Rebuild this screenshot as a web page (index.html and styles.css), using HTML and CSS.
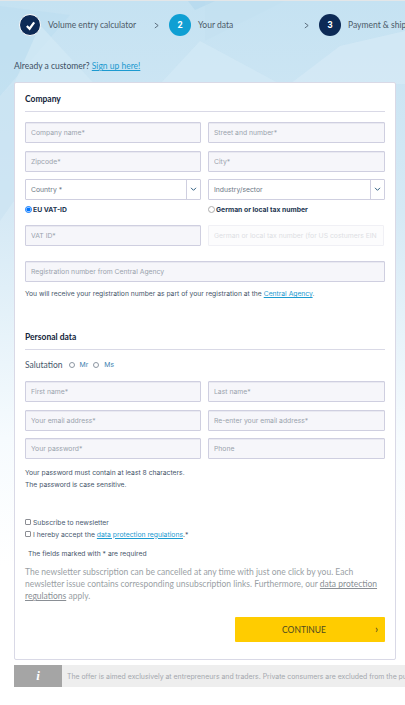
FILE: index.html
```html
<!DOCTYPE html>
<html lang="en">
  <head>
    <meta charset="UTF-8" />
    <meta name="viewport" content="width=device-width, initial-scale=1.0" />
    <title>Your data</title>
    <link rel="stylesheet" href="styles.css">
  </head>
  <body>
    <svg class="bg-shapes" viewBox="0 0 405 705" preserveAspectRatio="none" aria-hidden="true">
      <defs>
        <linearGradient id="bgFade" x1="0" y1="0" x2="0" y2="1">
          <stop offset="0" stop-color="#c5e2f2" />
          <stop offset="0.3" stop-color="#d5e9f5" />
          <stop offset="0.62" stop-color="#f6fbfe" />
          <stop offset="0.8" stop-color="#ffffff" />
        </linearGradient>
      </defs>
      <rect width="405" height="705" fill="url(#bgFade)" />
      <polygon points="0,5 70,14 0,95" fill="#bcddf0" opacity="0.6" />
      <polygon points="40,24 110,100 14,83" fill="#d3e9f5" opacity="0.7" />
      <polygon points="188,0 215,0 195,9" fill="#b5d9ee" opacity="0.8" />
      <polygon points="205,0 285,0 205,40" fill="#bfdff0" opacity="0.3" />
      <polygon points="200,40 280,83 160,83" fill="#d2e8f5" opacity="0.8" />
      <polygon points="340,45 405,30 405,83 290,83" fill="#d8ebf6" opacity="0.6" />
      <polygon points="0,95 14,83 14,200 0,220" fill="#c9e3f2" opacity="0.6" />
    </svg>

    <div class="steps">
      <div class="step">
        <span class="step-dot step-done">
          <svg viewBox="0 0 12 12" width="11" height="11"><path d="M2 6.5 L5 9.5 L10 2.5" fill="none" stroke="#fff" stroke-width="2.4" /></svg>
        </span>
        <span class="step-label">Volume entry calculator</span>
        <span class="step-arrow">
          <svg viewBox="0 0 6 8" width="5" height="7"><path d="M1 1 L5 4 L1 7" fill="none" stroke="#4b5a6a" stroke-width="1" /></svg>
        </span>
      </div>
      <div class="step">
        <span class="step-dot step-active">2</span>
        <span class="step-label">Your data</span>
        <span class="step-arrow">
          <svg viewBox="0 0 6 8" width="5" height="7"><path d="M1 1 L5 4 L1 7" fill="none" stroke="#4b5a6a" stroke-width="1" /></svg>
        </span>
      </div>
      <div class="step">
        <span class="step-dot">3</span>
        <span class="step-label">Payment &amp; shipping</span>
      </div>
    </div>

    <p class="customer">Already a customer? <a href="#">Sign up here!</a></p>

    <form class="card">
      <h2 class="section-title">Company</h2>
      <div class="field-grid">
        <input class="field" type="text" placeholder="Company name*" />
        <input class="field" type="text" placeholder="Street and number*" />
        <input class="field" type="text" placeholder="Zipcode*" />
        <input class="field" type="text" placeholder="City*" />
        <div class="select"><span>Country *</span><b><svg viewBox="0 0 8 6" width="7" height="5"><path d="M1 1 L4 4 L7 1" fill="none" stroke="#1d4f73" stroke-width="1.1" /></svg></b></div>
        <div class="select"><span>Industry/sector</span><b><svg viewBox="0 0 8 6" width="7" height="5"><path d="M1 1 L4 4 L7 1" fill="none" stroke="#1d4f73" stroke-width="1.1" /></svg></b></div>
      </div>

      <div class="tax-grid">
        <label class="tax-choice"><input type="radio" name="tax" checked /> EU VAT-ID</label>
        <label class="tax-choice"><input type="radio" name="tax" /> German or local tax number</label>
        <input class="field" type="text" placeholder="VAT ID*" />
        <input class="field field-off" type="text" placeholder="German or local tax number (for US costumers EIN" />
      </div>

      <input class="field field-wide" type="text" placeholder="Registration number from Central Agency" />
      <p class="note note-agency">You will receive your registration number as part of your registration at the <a href="#">Central Agency</a>.</p>

      <h2 class="section-title section-personal">Personal data</h2>
      <div class="salutation">
        <span class="salutation-label">Salutation</span>
        <label><i></i>Mr</label>
        <label><i></i>Ms</label>
      </div>
      <div class="field-grid">
        <input class="field" type="text" placeholder="First name*" />
        <input class="field" type="text" placeholder="Last name*" />
        <input class="field" type="text" placeholder="Your email address*" />
        <input class="field" type="text" placeholder="Re-enter your email address*" />
        <input class="field" type="text" placeholder="Your password*" />
        <input class="field" type="text" placeholder="Phone" />
      </div>
      <p class="note note-password">Your password must contain at least 8 characters.<br />The password is case sensitive.</p>

      <label class="check check-first"><input type="checkbox" /><span>Subscribe to newsletter</span></label>
      <label class="check"><input type="checkbox" /><span>I hereby accept the <a href="#">data protection regulations</a>.*</span></label>
      <p class="note note-required">The fields marked with * are required</p>
      <p class="newsletter">The newsletter subscription can be cancelled at any time with just one click by you. Each newsletter issue contains corresponding unsubscription links. Furthermore, our <a href="#">data protection regulations</a> apply.</p>

      <div class="actions">
        <button type="button" class="continue">CONTINUE<span>›</span></button>
      </div>
    </form>

    <div class="info-bar">
      <div class="info-icon">i</div>
      <p>The offer is aimed exclusively at entrepreneurs and traders. Private consumers are excluded from the purchase.</p>
    </div>
  </body>
</html>
```

FILE: styles.css
```css
* {
  margin: 0;
  padding: 0;
  box-sizing: border-box;
}

html,
body {
  height: 705px;
  overflow: hidden;
}

body {
  position: relative;
  font-family: "Lato", sans-serif;
  color: #1c3550;
  background-color: #fff;
  border-top: 1px solid #e3e6e8;
}

a {
  color: #1c9ad0;
}

.bg-shapes {
  position: absolute;
  top: 0;
  left: 0;
  width: 405px;
  height: 705px;
  z-index: -1;
}

/* Steps */
.steps {
  display: flex;
  padding: 13px 0 0 19px;
  width: 600px;
}

.step {
  display: flex;
  align-items: center;
  width: 150px;
  height: 22px;
  position: relative;
}

.step-dot {
  display: flex;
  justify-content: center;
  align-items: center;
  width: 22px;
  height: 22px;
  flex-shrink: 0;
  border-radius: 50%;
  background-color: #0d2a56;
  color: white;
  font-family: "Roboto", sans-serif;
  font-size: 9px;
  font-weight: bold;
}

.step-done {
  border: 1px solid #fff;
}

.step-active {
  background-color: #0f9fd3;
}

.step-label {
  margin-left: 7px;
  font-size: 8.5px;
  color: #4c5a68;
  white-space: nowrap;
}

.step-arrow {
  display: flex;
  position: absolute;
  left: 135px;
  top: 8px;
}

.customer {
  margin: 24px 0 0 14px;
  font-size: 8.5px;
  line-height: 13px;
  color: #3c4f63;
}

/* Card */
.card {
  margin: 9px 0 0 14px;
  width: 382px;
  height: 578px;
  padding: 10px 10px 0;
  background-color: #fff;
  border: 1px solid #d9d9e6;
  border-radius: 2px;
}

.section-title {
  height: 19px;
  font-size: 8.5px;
  line-height: 12px;
  font-weight: bold;
  color: #12243a;
  border-bottom: 1px solid #d9d9e6;
  margin-bottom: 10px;
}

.section-personal {
  margin-top: 32px;
  height: 19px;
  margin-bottom: 0;
}

.field-grid {
  display: grid;
  grid-template-columns: 176px 177px;
  column-gap: 7px;
  row-gap: 7.5px;
}

.field,
.select {
  height: 21px;
  width: 100%;
  border: 1px solid #cfcfe0;
  border-radius: 1px;
  background-color: #f6f6fa;
  box-shadow: inset 0 1px 0 #e9e9f1;
  padding: 0 5px;
  font-family: "Inter", sans-serif;
  font-size: 6.8px;
  color: #6b7785;
}

.field::placeholder {
  color: #9aa3ad;
  opacity: 1;
}

.field-off {
  background-color: #fcfcfd;
  border-color: #f0f0f5;
  box-shadow: none;
  width: 176px;
}

.field-off::placeholder {
  color: #dcdfe4;
}

.field-wide {
  display: block;
  margin-top: 15px;
}

.select {
  display: flex;
  align-items: center;
  justify-content: space-between;
  background-color: #fff;
  box-shadow: none;
  padding: 0 0 0 5px;
}

.select b {
  display: flex;
  align-items: center;
  justify-content: center;
  width: 14px;
  height: 100%;
  border-left: 1px solid #cfcfe0;
}

.tax-grid {
  display: grid;
  grid-template-columns: 176px 177px;
  column-gap: 7px;
  row-gap: 10px;
  margin-top: 4px;
}

.tax-choice {
  display: flex;
  align-items: center;
  gap: 1px;
  height: 11px;
  font-family: "Inter", sans-serif;
  font-size: 6.8px;
  font-weight: bold;
  color: #1c3550;
}

.tax-choice input {
  width: 7px;
  height: 7px;
}

.tax-choice input:not(:checked) {
  opacity: 0.6;
}

.note {
  font-family: "Inter", sans-serif;
  font-size: 6.75px;
  color: #46566a;
}

.note-agency {
  margin-top: 6px;
  line-height: 11px;
}

.note-password {
  margin-top: 8px;
  line-height: 12px;
}

.note-required {
  margin: 8px 0 0 3px;
  line-height: 11px;
}

/* Salutation */
.salutation {
  display: flex;
  align-items: center;
  height: 31px;
  padding-bottom: 2px;
  font-size: 8.5px;
  color: #46566a;
}

.salutation-label {
  margin-right: 6px;
}

.salutation label {
  display: flex;
  align-items: center;
  margin-right: 5px;
  font-family: "Inter", sans-serif;
  font-size: 6.8px;
  color: #3b7fb0;
}

.salutation i {
  display: block;
  width: 6px;
  height: 6px;
  margin-right: 5px;
  border: 1px solid #8d97a2;
  border-radius: 50%;
}

/* Checkboxes */
.check {
  display: flex;
  align-items: center;
  gap: 2px;
  height: 12px;
  font-family: "Inter", sans-serif;
  font-size: 6.8px;
  color: #4a5a70;
}

.check-first {
  margin-top: 25px;
}

.check input {
  appearance: none;
  width: 6px;
  height: 6px;
  border: 1px solid #8c8e94;
  border-radius: 1px;
  background-color: #fff;
}

.newsletter {
  margin-top: 7px;
  font-size: 8.5px;
  line-height: 12px;
  color: #9a9fa5;
}

.newsletter a {
  color: #8a8f95;
}

.actions {
  display: flex;
  justify-content: flex-end;
  margin-top: 15px;
}

.continue {
  position: relative;
  width: 150px;
  height: 25px;
  padding-right: 12px;
  border: none;
  border-radius: 1px;
  background-color: #ffcc00;
  font-family: "Lato", sans-serif;
  font-size: 8.5px;
  color: #4c4a20;
}

.continue span {
  position: absolute;
  right: 7px;
  top: 5px;
  font-size: 11px;
}

/* Info bar */
.info-bar {
  display: flex;
  align-items: center;
  margin: 5px 0 0 14px;
  width: 391px;
  height: 22px;
  background-color: #eeeeee;
  overflow: hidden;
}

.info-icon {
  display: flex;
  justify-content: center;
  align-items: center;
  flex-shrink: 0;
  width: 48px;
  height: 100%;
  background-color: #a5a5a5;
  color: white;
  font-family: "Liberation Serif", serif;
  font-style: italic;
  font-weight: bold;
  font-size: 13px;
}

.info-bar p {
  margin-left: 5px;
  white-space: nowrap;
  font-family: "Inter", sans-serif;
  font-size: 6.9px;
  color: #a3a7ad;
}
```
